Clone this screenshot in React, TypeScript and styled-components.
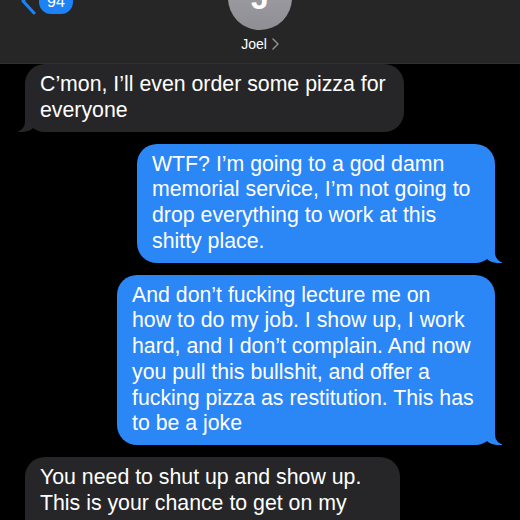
import React from "react";
import styled, { createGlobalStyle } from "styled-components";

const Global = createGlobalStyle`
  html, body { margin: 0; padding: 0; background: #000; }
  body { font-family: "Liberation Sans", Arial, sans-serif; overflow: hidden; }
`;

const Screen = styled.div`
  width: 520px;
  height: 520px;
  background: #000;
  overflow: hidden;
  display: flex;
  flex-direction: column;
`;

const Header = styled.header`
  position: relative;
  height: 63px;
  flex-shrink: 0;
  background: #262626;
  border-bottom: 1px solid #303030;
  display: flex;
  flex-direction: column;
  align-items: center;
  z-index: 2;
`;

const Back = styled.div`
  position: absolute;
  left: 19px;
  top: -13px;
  display: flex;
  align-items: center;
  gap: 2px;
`;

const Badge = styled.span`
  background: #1d82f5;
  color: #fff;
  font-size: 16px;
  line-height: 25px;
  padding: 0 8px;
  border-radius: 12px;
`;

const Avatar = styled.div`
  width: 64px;
  height: 64px;
  margin-top: -34px;
  border-radius: 50%;
  background: linear-gradient(#a4a4aa, #8e8e94);
  color: #fff;
  display: flex;
  align-items: center;
  justify-content: center;
  font-size: 32px;
  font-weight: 700;
  line-height: 1;
`;

const Name = styled.div`
  margin-top: 6px;
  color: #fff;
  font-size: 14px;
  display: flex;
  align-items: center;
  gap: 5px;
`;

const List = styled.main`
  display: flex;
  flex-direction: column;
  gap: 12px;
  padding: 0;
`;

const Bubble = styled.div<{ $me?: boolean; $w: number }>`
  position: relative;
  box-sizing: border-box;
  width: ${(p) => p.$w}px;
  align-self: ${(p) => (p.$me ? "flex-end" : "flex-start")};
  margin: ${(p) => (p.$me ? "0 25px 0 0" : "0 0 0 25px")};
  padding: 8px 12px 8px 15px;
  border-radius: 20px;
  background: ${(p) => (p.$me ? "#2b86f6" : "#262628")};
  color: #fff;
  font-size: 21.3px;
  line-height: 25.75px;
  white-space: pre-line;

  &::before {
    content: "";
    position: absolute;
    bottom: 0;
    ${(p) => (p.$me ? "right: -7px;" : "left: -7px;")}
    width: 20px;
    height: 20px;
    background: ${(p) => (p.$me ? "#2b86f6" : "#262628")};
    ${(p) =>
      p.$me
        ? "border-bottom-left-radius: 15px;"
        : "border-bottom-right-radius: 15px;"}
  }
  &::after {
    content: "";
    position: absolute;
    bottom: 0;
    ${(p) => (p.$me ? "right: -10px;" : "left: -10px;")}
    width: 10px;
    height: 20px;
    background: #000;
    ${(p) =>
      p.$me
        ? "border-bottom-left-radius: 10px;"
        : "border-bottom-right-radius: 10px;"}
  }
`;

export default function App() {
  return (
    <Screen>
      <Global />
      <Header>
        <Back>
          <svg width="18" height="28" viewBox="0 0 18 28">
            <path d="M15 2 L4 14 L15 26" fill="none" stroke="#1d82f5" strokeWidth="3" strokeLinecap="round" strokeLinejoin="round" />
          </svg>
          <Badge>94</Badge>
        </Back>
        <Avatar>J</Avatar>
        <Name>
          Joel
          <svg width="7" height="12" viewBox="0 0 7 12">
            <path d="M1 1 L6 6 L1 11" fill="none" stroke="#8e8e93" strokeWidth="1.5" strokeLinecap="round" strokeLinejoin="round" />
          </svg>
        </Name>
      </Header>
      <List>
        <Bubble $w={379}>{"C’mon, I’ll even order some pizza for\neveryone"}</Bubble>
        <Bubble $me $w={358}>
          {"WTF? I’m going to a god damn\nmemorial service, I’m not going to\ndrop everything to work at this\nshitty place."}
        </Bubble>
        <Bubble $me $w={378}>
          {"And don’t fucking lecture me on\nhow to do my job. I show up, I work\nhard, and I don’t complain. And now\nyou pull this bullshit, and offer a\nfucking pizza as restitution. This has\nto be a joke"}
        </Bubble>
        <Bubble $w={375}>
          {"You need to shut up and show up.\nThis is your chance to get on my\ngood side again."}
        </Bubble>
      </List>
    </Screen>
  );
}
